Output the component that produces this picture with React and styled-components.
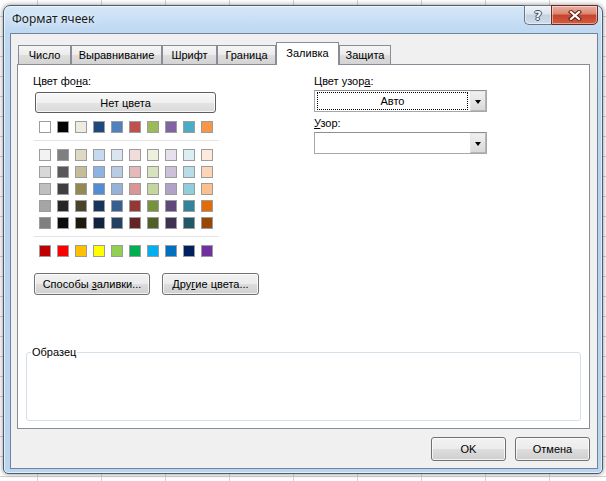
import styled, { createGlobalStyle } from "styled-components";

const GlobalStyle = createGlobalStyle`
  html, body { margin: 0; padding: 0; }
  body {
    width: 606px;
    height: 481px;
    overflow: hidden;
    font-family: "Liberation Sans", Arial, sans-serif;
    color: #000;
  }
`;

const Desktop = styled.div`
  width: 606px;
  height: 481px;
  box-sizing: border-box;
  padding: 5px 0 0 3px;
  background-color: #fff;
  background-image: linear-gradient(90deg, #d4d4d4 1px, transparent 1px),
    linear-gradient(#d4d4d4 1px, transparent 1px);
  background-size: 64px 100%, 100% 20px;
  background-position: 37px 0, 0 16px;
`;

const Window = styled.div`
  width: 600px;
  height: 469px;
  box-sizing: border-box;
  border: 1px solid #4c5c6e;
  border-radius: 7px 7px 5px 5px;
  background: linear-gradient(180deg, #d6e8f9 0%, #c0d9f2 5%, #b6d2ee 40%, #b9d5f0 100%);
  box-shadow: 0 0 5px rgba(0, 0, 0, 0.45), inset 0 0 0 1px rgba(255, 255, 255, 0.6);
  padding: 0 4px 4px 6px;
  display: flex;
  flex-direction: column;
`;

const TitleBar = styled.div`
  height: 27px;
  display: flex;
  justify-content: space-between;
  align-items: flex-start;
`;

const Title = styled.div`
  margin: 5px 0 0 2px;
  font-family: "Noto Sans", "Open Sans", sans-serif;
  font-size: 12px;
  line-height: 16px;
  color: #1b1b1b;
  text-shadow: 0 0 6px rgba(255, 255, 255, 0.9);
`;

const CaptionButtons = styled.div`
  display: flex;
  margin-top: -1px;
`;

const CaptionButton = styled.div`
  box-sizing: border-box;
  height: 20px;
  width: ${(p) => p.$w}px;
  display: flex;
  align-items: center;
  justify-content: center;
  border: 1px solid ${(p) => (p.$close ? "#6b2a20" : "#6a7889")};
  border-right: ${(p) => (p.$close ? "1px solid #6b2a20" : "none")};
  border-radius: ${(p) => (p.$close ? "0 0 5px 0" : "0 0 0 5px")};
  background: ${(p) =>
    p.$close
      ? "linear-gradient(#eab0a2 0%, #dc8570 45%, #c7432c 50%, #cf5d40 100%)"
      : "linear-gradient(#eef3f8 0%, #dbe5ef 45%, #c2d1e1 50%, #d0dce9 100%)"};
  box-shadow: inset 0 0 0 1px rgba(255, 255, 255, 0.45);
`;

const Help = styled.span`
  font-family: "DejaVu Sans", sans-serif;
  font-weight: bold;
  font-size: 13px;
  line-height: 13px;
  color: #f4f6f8;
  text-shadow: 1px 0 0 #3e4b59, -1px 0 0 #3e4b59, 0 1px 0 #3e4b59, 0 -1px 0 #3e4b59;
`;

const Client = styled.div`
  flex: 1;
  border: 1px solid #70839a;
  background: #f0f0f0;
  padding: 8px 7px 7px 6px;
  display: flex;
  flex-direction: column;
`;

const TabStrip = styled.div`
  display: flex;
  align-items: flex-end;
  height: 22px;
  padding-left: 1px;
`;

const Tab = styled.div`
  box-sizing: border-box;
  width: ${(p) => p.$w}px;
  height: ${(p) => (p.$active ? 23 : 19)}px;
  margin-bottom: ${(p) => (p.$active ? -1 : 0)}px;
  padding-top: ${(p) => (p.$active ? 4 : 3)}px;
  border: 1px solid #898c95;
  border-bottom: none;
  background: ${(p) =>
    p.$active ? "#fff" : "linear-gradient(#f6f6f6 0%, #ebebeb 50%, #dedede 51%, #d3d3d3 100%)"};
  position: relative;
  z-index: ${(p) => (p.$active ? 1 : 0)};
  font-size: 11px;
  line-height: 13px;
  text-align: center;
  white-space: nowrap;
`;

const Panel = styled.div`
  height: 365px;
  box-sizing: border-box;
  border: 1px solid #898c95;
  background: #fff;
  padding: 10px 8px 7px 8px;
  display: flex;
  flex-direction: column;
`;

const TopArea = styled.div`
  display: flex;
  gap: 95px;
  padding-left: 7px;
`;

const Column = styled.div`
  width: ${(p) => p.$w}px;
  display: flex;
  flex-direction: column;
  align-items: flex-start;
`;

const Label = styled.div`
  font-size: 11px;
  line-height: 13px;
  margin-top: ${(p) => p.$mt || 0}px;
  white-space: nowrap;
`;

const Button = styled.button`
  box-sizing: border-box;
  width: ${(p) => p.$w}px;
  height: ${(p) => p.$h || 22}px;
  margin: 0;
  padding: 0;
  border: 1px solid #707070;
  border-radius: 3px;
  background: linear-gradient(#f2f2f2 0%, #ebebeb 50%, #dddddd 51%, #cfcfcf 100%);
  box-shadow: inset 0 0 0 1px rgba(255, 255, 255, 0.75);
  font-family: "Liberation Sans", Arial, sans-serif;
  font-size: 11px;
  color: #000;
  white-space: nowrap;
`;

const NoColorButton = styled(Button)`
  margin: 4px 0 0 2px;
  border-color: #5e5e5e;
  background: linear-gradient(#f8f8f8 0%, #f0f0f0 50%, #e4e4e4 51%, #dadada 100%);
`;

const SwatchRow = styled.div`
  display: grid;
  grid-template-columns: repeat(10, 12px);
  column-gap: 6px;
  row-gap: 5px;
  padding-left: 6px;
  margin-top: ${(p) => p.$mt}px;
`;

const Swatch = styled.div`
  width: 12px;
  height: 12px;
  box-sizing: border-box;
  border: 1px solid #9c9c9c;
  background: ${(p) => p.$c};
`;

const Separator = styled.div`
  width: 185px;
  height: 1px;
  margin: 7px 0 0 1px;
  background: #e2e2e2;
`;

const ButtonRow = styled.div`
  display: flex;
  gap: 12px;
  margin: 16px 0 0 1px;
`;

const Combo = styled.div`
  width: 100%;
  height: 22px;
  box-sizing: border-box;
  margin-top: 2px;
  border: 1px solid #a7a7a7;
  border-top-color: #8f8f8f;
  background: #fff;
  display: flex;
`;

const ComboValue = styled.div`
  flex: 1;
  padding: 1px 2px 1px 2px;
  display: flex;
`;

const FocusBox = styled.div`
  flex: 1;
  border: 1px dotted ${(p) => (p.$focus ? "#000" : "transparent")};
  font-size: 11px;
  line-height: 16px;
  text-align: center;
`;

const ComboArrow = styled.div`
  width: 16px;
  box-sizing: border-box;
  border: 1px solid #b5b5b5;
  border-top-color: #e6e6e6;
  border-left-color: #e6e6e6;
  background: linear-gradient(#f1f1f1, #d9d9d9);
  display: flex;
  align-items: center;
  justify-content: center;
`;

const Triangle = styled.div`
  width: 0;
  height: 0;
  border-left: 3.5px solid transparent;
  border-right: 3.5px solid transparent;
  border-top: 4px solid #000;
  margin-top: 1px;
`;

const Group = styled.fieldset`
  margin: auto 0 0 0;
  height: 75px;
  box-sizing: border-box;
  border: 1px solid #d5dfe5;
  border-radius: 3px;
  padding: 0 0 0 4px;
`;

const Legend = styled.legend`
  padding: 0 1px;
  font-size: 11px;
  line-height: 13px;
`;

const Footer = styled.div`
  display: flex;
  justify-content: flex-end;
  gap: 9px;
  margin-top: 8px;
`;

const themeRow = ["#FFFFFF", "#000000", "#EEECE1", "#1F497D", "#4F81BD", "#C0504D", "#9BBB59", "#8064A2", "#4BACC6", "#F79646"];

const tints = [
  ["#F2F2F2", "#7F7F7F", "#DDD9C3", "#C6D9F0", "#DBE5F1", "#F2DCDB", "#EBF1DD", "#E5E0EC", "#DBEEF3", "#FDEADA"],
  ["#D8D8D8", "#595959", "#C4BD97", "#8DB3E2", "#B8CCE4", "#E5B9B7", "#D7E3BC", "#CCC1D9", "#B7DDE8", "#FBD5B5"],
  ["#BFBFBF", "#3F3F3F", "#938953", "#548DD4", "#95B3D7", "#D99694", "#C3D69B", "#B2A2C7", "#92CDDC", "#FAC08F"],
  ["#A5A5A5", "#262626", "#494429", "#17365D", "#366092", "#953734", "#76923C", "#5F497A", "#31859B", "#E36C09"],
  ["#7F7F7F", "#0C0C0C", "#1D1B10", "#0F243E", "#244061", "#632423", "#4F6128", "#3F3151", "#205867", "#974806"],
];

const standard = ["#C00000", "#FF0000", "#FFC000", "#FFFF00", "#92D050", "#00B050", "#00B0F0", "#0070C0", "#002060", "#7030A0"];

const tabs = [
  { label: "Число", w: 53 },
  { label: "Выравнивание", w: 91 },
  { label: "Шрифт", w: 55 },
  { label: "Граница", w: 59 },
  { label: "Заливка", w: 63, active: true },
  { label: "Защита", w: 52 },
];

const CloseIcon = () => (
  <svg width="14" height="11" viewBox="0 0 14 11">
    <path d="M3 2 L11 9 M11 2 L3 9" stroke="#5a2015" strokeWidth="4.2" strokeLinecap="square" />
    <path d="M3 2 L11 9 M11 2 L3 9" stroke="#fff" strokeWidth="2.2" strokeLinecap="square" />
  </svg>
);

const DropDown = ({ value, focus }) => (
  <Combo>
    <ComboValue>
      <FocusBox $focus={focus}>{value}</FocusBox>
    </ComboValue>
    <ComboArrow>
      <Triangle />
    </ComboArrow>
  </Combo>
);

export default function App() {
  return (
    <>
      <GlobalStyle />
      <Desktop>
        <Window>
          <TitleBar>
            <Title>Формат ячеек</Title>
            <CaptionButtons>
              <CaptionButton $w={27}>
                <Help>?</Help>
              </CaptionButton>
              <CaptionButton $w={47} $close>
                <CloseIcon />
              </CaptionButton>
            </CaptionButtons>
          </TitleBar>
          <Client>
            <TabStrip>
              {tabs.map((t) => (
                <Tab key={t.label} $w={t.w} $active={t.active}>
                  {t.label}
                </Tab>
              ))}
            </TabStrip>
            <Panel>
              <TopArea>
                <Column $w={186}>
                  <Label>
                    Цвет фо<u>н</u>а:
                  </Label>
                  <NoColorButton $w={181} $h={21}>
                    Нет цвета
                  </NoColorButton>
                  <SwatchRow $mt={8}>
                    {themeRow.map((c, i) => (
                      <Swatch key={i} $c={c} />
                    ))}
                  </SwatchRow>
                  <Separator />
                  <SwatchRow $mt={8}>
                    {tints.flat().map((c, i) => (
                      <Swatch key={i} $c={c} />
                    ))}
                  </SwatchRow>
                  <Separator />
                  <SwatchRow $mt={8}>
                    {standard.map((c, i) => (
                      <Swatch key={i} $c={c} />
                    ))}
                  </SwatchRow>
                  <ButtonRow>
                    <Button $w={116}>
                      Способы <u>з</u>аливки...
                    </Button>
                    <Button $w={97}>
                      Дру<u>г</u>ие цвета...
                    </Button>
                  </ButtonRow>
                </Column>
                <Column $w={173}>
                  <Label>
                    Цвет узор<u>а</u>:
                  </Label>
                  <DropDown value="Авто" focus />
                  <Label $mt={5}>
                    <u>У</u>зор:
                  </Label>
                  <DropDown value="" />
                </Column>
              </TopArea>
              <Group>
                <Legend>Образец</Legend>
              </Group>
            </Panel>
            <Footer>
              <Button $w={75} $h={24}>
                OK
              </Button>
              <Button $w={75} $h={24}>
                Отмена
              </Button>
            </Footer>
          </Client>
        </Window>
      </Desktop>
    </>
  );
}
